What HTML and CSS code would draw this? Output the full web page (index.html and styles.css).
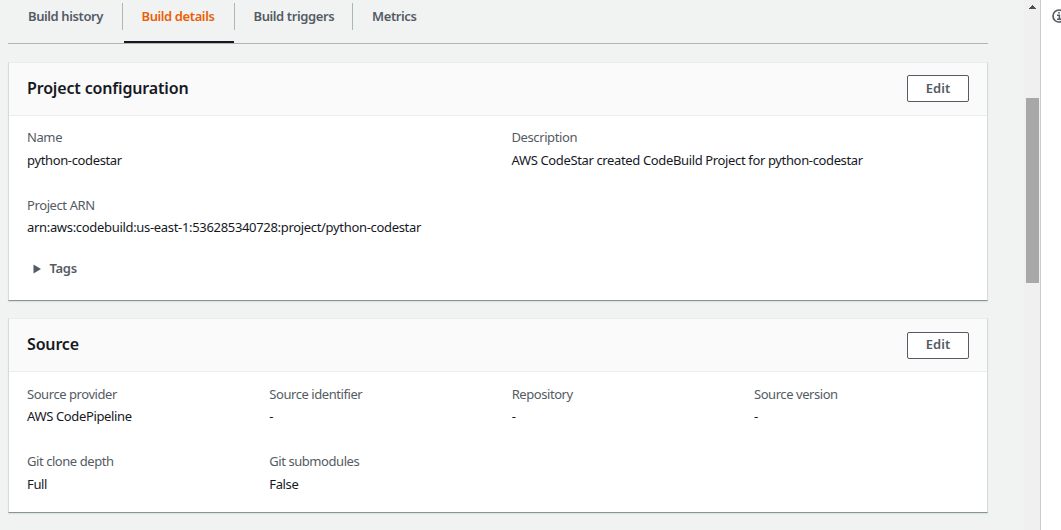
FILE: index.html
```html
<!DOCTYPE html>
<html lang="en">
<head>
<meta charset="utf-8">
<title>Build details</title>
<link rel="stylesheet" href="styles.css">
</head>
<body>
<div class="app">
  <main class="content">
    <nav class="tabs">
      <a class="tab tab-history"><span>Build history</span></a>
      <a class="tab tab-details active"><span>Build details</span></a>
      <a class="tab tab-triggers"><span>Build triggers</span></a>
      <a class="tab tab-metrics"><span>Metrics</span></a>
    </nav>
    <section class="card card-project">
      <header class="card-header"><h2>Project configuration</h2><button class="edit">Edit</button></header>
      <div class="grid two">
        <div class="field"><span class="label">Name</span><span class="value">python-codestar</span></div>
        <div class="field"><span class="label">Description</span><span class="value">AWS CodeStar created CodeBuild Project for python-codestar</span></div>
        <div class="field"><span class="label">Project ARN</span><span class="value arn">arn:aws:codebuild:us-east-1:536285340728:project/python-codestar</span></div>
      </div>
      <div class="expander">
        <svg class="caret" width="8" height="10" viewBox="0 0 8 10"><path d="M0.5 0.5 8 5 0.5 9.500Z" fill="#545b64"/></svg>
        <span>Tags</span>
      </div>
    </section>
    <section class="card card-source">
      <header class="card-header"><h2>Source</h2><button class="edit">Edit</button></header>
      <div class="grid four">
        <div class="field"><span class="label">Source provider</span><span class="value">AWS CodePipeline</span></div>
        <div class="field"><span class="label">Source identifier</span><span class="value">-</span></div>
        <div class="field"><span class="label">Repository</span><span class="value">-</span></div>
        <div class="field"><span class="label">Source version</span><span class="value">-</span></div>
        <div class="field"><span class="label">Git clone depth</span><span class="value">Full</span></div>
        <div class="field"><span class="label">Git submodules</span><span class="value">False</span></div>
      </div>
    </section>
  </main>
  <div class="scrollbar">
    <svg class="arrow" width="7" height="4" viewBox="0 0 7 4" shape-rendering="crispEdges"><path d="M3 0h1v1h1v1h1v1h1v1H0V3h1V2h1V1h1Z" fill="#505050"/></svg>
    <div class="thumb"></div>
  </div>
  <aside class="help">
    <svg class="info" width="14" height="14" viewBox="0 0 14 14" fill="none" stroke="#545b64"><circle cx="7" cy="7" r="6" stroke-width="1.700"/><path d="M5 6.200H7.400V10M5 10.200H9.500M6.200 3.700H7.800" stroke-width="1.600"/></svg>
  </aside>
</div>
</body>
</html>
```
FILE: styles.css
```css
* { box-sizing: border-box; }
body { margin: 0; background: #f2f3f3; font-family: "Noto Sans", sans-serif; font-size: 13px; color: #16191f; overflow: hidden; }
.app { display: flex; height: 530px; width: 1061px; overflow: hidden; }
.content { width: 1024px; padding-left: 8px; flex: none; background: #f1f3f3; }

.tabs { display: flex; width: 980px; height: 44px; padding-top: 3px; border-bottom: 1px solid #aab7b8; margin-bottom: 18px; }
.tab { display: flex; height: 40px; padding-left: 20px; color: #545b64; font-weight: 600; line-height: 26px; white-space: nowrap; background: linear-gradient(#aab7b8, #aab7b8) right 0 top 0 / 1px 27px no-repeat; }
.tab-history { width: 115px; }
.tab-details { width: 112px; padding-left: 18.500px; }
.tab-triggers { width: 118px; padding-left: 18.500px; }
.tab-metrics { padding-left: 19px; background: none; }
.tab.active { color: #eb5f07; background: linear-gradient(#aab7b8, #aab7b8) right 0 top 0 / 1px 27px no-repeat, linear-gradient(#16191f, #16191f) 1px 38px / 110px 2px no-repeat; }
.tabs span { letter-spacing: -0.400px; }

.card { width: 980px; background: #fff; border: 1px solid #d5dbdb; border-top-color: #eaeded; border-bottom-color: #879596; box-shadow: 0 1px 1px rgba(0, 28, 36, .08); margin-bottom: 17px; }
.card-project { height: 239px; }
.card-source { height: 195px; }
.card-header { height: 53px; padding: 0 18px; display: flex; align-items: center; justify-content: space-between; background: #fafafa; border-bottom: 1px solid #eaeded; }
h2 { margin: 0; padding-bottom: 2px; font-size: 16px; font-weight: 600; line-height: 22px; letter-spacing: -0.160px; }
.edit { align-self: flex-start; width: 62px; height: 27px; margin-top: 12px; padding: 0 0 1px; background: #fff; border: 1px solid #545b64; border-radius: 2px; color: #545b64; font: 600 13px/24px "Noto Sans", sans-serif; }
.card-source .edit { margin-top: 13px; padding-bottom: 3px; line-height: 22px; }

.grid { display: grid; padding: 10px 18px 0; row-gap: 23px; white-space: nowrap; }
.two { grid-template-columns: 484.500px 1fr; }
.four { padding-top: 10.750px; grid-template-columns: 242.300px 242.400px 242.300px 1fr; }
.field { display: flex; flex-direction: column; height: 44.500px; line-height: 22.500px; }
.label { color: #545b64; letter-spacing: -0.440px; }
.two .label { letter-spacing: -0.400px; }
.value { letter-spacing: -0.360px; }
.arn { letter-spacing: -0.320px; }
.expander { display: flex; align-items: center; gap: 8.500px; padding-left: 24px; margin-top: 20px; height: 22px; font-weight: 600; color: #545b64; letter-spacing: -0.300px; }
.expander span { padding-bottom: 2px; }

.scrollbar { flex: none; width: 16px; padding: 5px 1px 0 2px; background: #f0f0f0; }
.arrow { display: block; margin: 0 0 89px 3px; }
.thumb { height: 185px; background: #a8a8a8; }
.help { flex: none; width: 30px; border-left: 1px solid #c8cccc; background: #fff; padding: 9px 0 0 11px; }
.info { display: block; }
```
